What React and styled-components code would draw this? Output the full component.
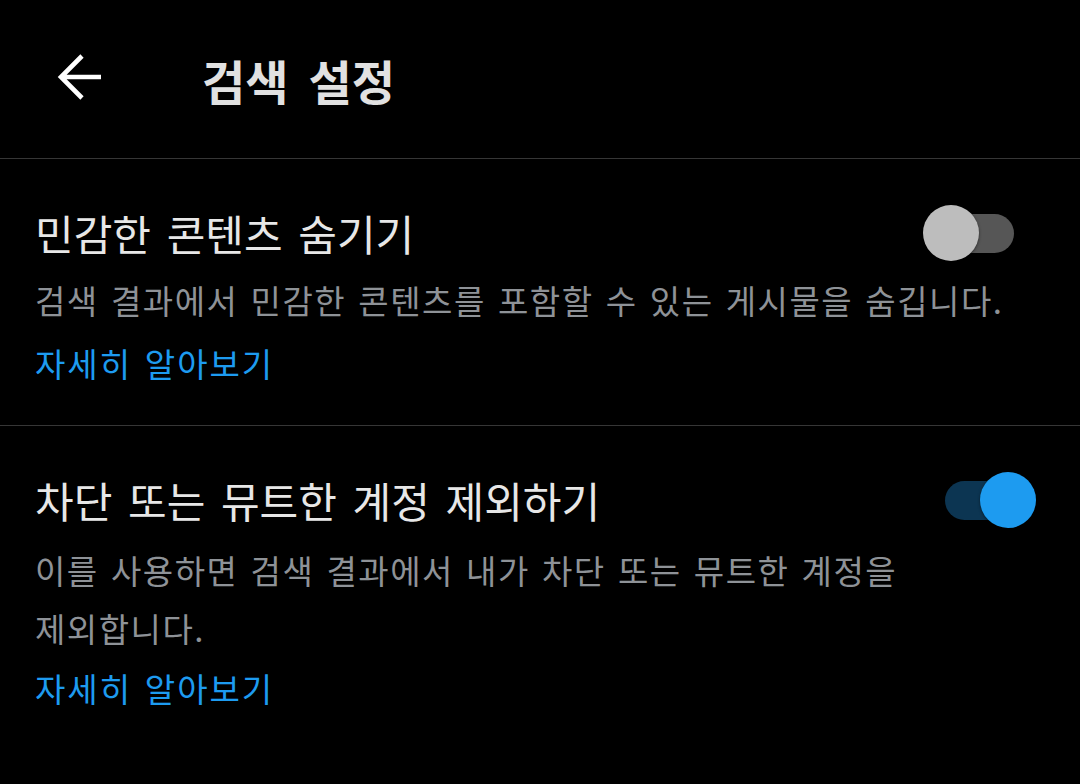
import { useState } from "react";
import styled, { createGlobalStyle } from "styled-components";

const GlobalStyle = createGlobalStyle`
  html, body {
    margin: 0;
    padding: 0;
    background: #000;
  }
  body {
    font-family: "Noto Sans CJK KR", "Noto Sans", sans-serif;
    -webkit-font-smoothing: antialiased;
  }
`;

const Page = styled.div`
  width: 1080px;
  height: 784px;
  background: #000;
  overflow: hidden;
`;

const Header = styled.header`
  display: flex;
  align-items: center;
  height: 158px;
  border-bottom: 1px solid #363636;
  padding-left: 55px;
`;

const BackButton = styled.button`
  display: flex;
  align-items: center;
  justify-content: center;
  width: 50px;
  height: 50px;
  padding: 0;
  margin-top: -4px;
  background: none;
  border: none;
  cursor: pointer;
`;

const HeaderTitle = styled.h1`
  margin: 0 0 0 97px;
  font-size: 47px;
  font-weight: 700;
  color: #e1e1e1;
  word-spacing: 0.2em;
`;

const Section = styled.section`
  padding: ${(p) => p.$top}px 44px ${(p) => p.$bottom}px 35px;
  border-bottom: ${(p) => (p.$divider ? "1px solid #363636" : "none")};
`;

const TitleRow = styled.div`
  display: flex;
  align-items: center;
  justify-content: space-between;
  height: 50px;
`;

const SettingTitle = styled.h2`
  margin: 0;
  font-size: 42px;
  font-weight: 400;
  line-height: 50px;
  color: #e7e7e7;
  word-spacing: 0.15em;
`;

const Description = styled.p`
  margin: ${(p) => p.$gap}px 0 0;
  font-size: 33px;
  line-height: 58px;
  color: #8e9297;
  letter-spacing: 1.5px;
  word-spacing: 0.1em;
  word-break: keep-all;
`;

const LearnMore = styled.a`
  display: block;
  margin-top: ${(p) => p.$gap}px;
  font-size: 33px;
  line-height: 58px;
  color: #1d9bf0;
  text-decoration: none;
  letter-spacing: 2px;
  word-spacing: 0.1em;
`;

const Toggle = styled.button`
  position: relative;
  flex: none;
  width: 113px;
  height: 56px;
  padding: 0;
  background: none;
  border: none;
  cursor: pointer;
`;

const Track = styled.span`
  position: absolute;
  left: 22px;
  top: 9px;
  width: 69px;
  height: 39px;
  border-radius: 20px;
  background: ${(p) => (p.$on ? "#0c3552" : "#565656")};
`;

const Thumb = styled.span`
  position: absolute;
  top: 0;
  left: ${(p) => (p.$on ? 57 : 0)}px;
  width: 56px;
  height: 56px;
  border-radius: 50%;
  background: ${(p) => (p.$on ? "#1d9bf0" : "#bdbdbd")};
  box-shadow: 0 1px 3px rgba(0, 0, 0, 0.5);
  transition: left 0.15s;
`;

function Switch({ on, onChange }) {
  return (
    <Toggle role="switch" aria-checked={on} onClick={() => onChange(!on)}>
      <Track $on={on} />
      <Thumb $on={on} />
    </Toggle>
  );
}

function BackArrow() {
  return (
    <svg width="46" height="46" viewBox="0 0 46 46" fill="none">
      <path
        d="M44 23H4M25 2L4 23l21 21"
        stroke="#fff"
        strokeWidth="4.6"
        strokeLinecap="butt"
        strokeLinejoin="miter"
      />
    </svg>
  );
}

export default function App() {
  const [hideSensitive, setHideSensitive] = useState(false);
  const [removeBlocked, setRemoveBlocked] = useState(true);

  return (
    <Page>
      <GlobalStyle />
      <Header>
        <BackButton aria-label="뒤로">
          <BackArrow />
        </BackButton>
        <HeaderTitle>검색 설정</HeaderTitle>
      </Header>

      <Section $top={49} $bottom={33} $divider>
        <TitleRow>
          <SettingTitle>민감한 콘텐츠 숨기기</SettingTitle>
          <Switch on={hideSensitive} onChange={setHideSensitive} />
        </TitleRow>
        <Description $gap={13}>
          검색 결과에서 민감한 콘텐츠를 포함할 수 있는 게시물을 숨깁니다.
        </Description>
        <LearnMore href="#" $gap={5}>자세히 알아보기</LearnMore>
      </Section>

      <Section $top={49} $bottom={30}>
        <TitleRow>
          <SettingTitle>차단 또는 뮤트한 계정 제외하기</SettingTitle>
          <Switch on={removeBlocked} onChange={setRemoveBlocked} />
        </TitleRow>
        <Description $gap={16}>
          이를 사용하면 검색 결과에서 내가 차단 또는 뮤트한 계정을 제외합니다.
        </Description>
        <LearnMore href="#" $gap={2}>자세히 알아보기</LearnMore>
      </Section>
    </Page>
  );
}
